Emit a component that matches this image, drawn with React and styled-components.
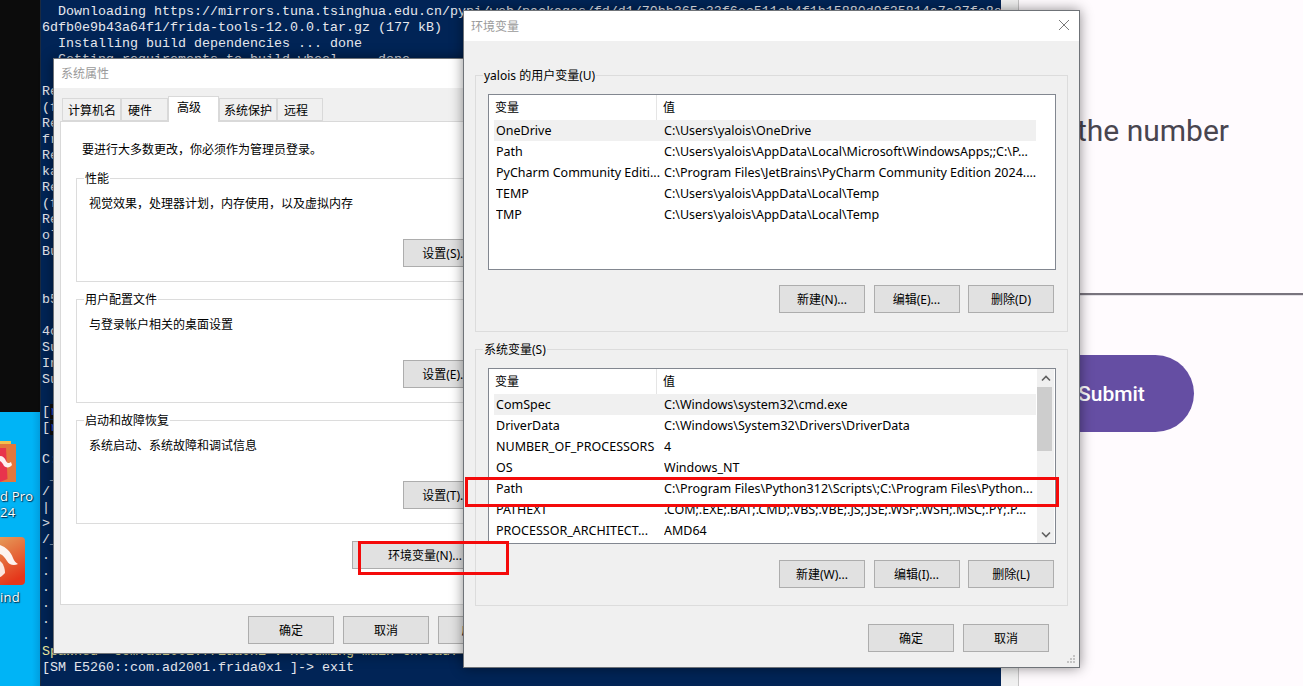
import React from "react";
import styled, { createGlobalStyle } from "styled-components";

const Global = createGlobalStyle`
  html, body { margin: 0; padding: 0; background: #0c0c0c; overflow: hidden; }
  * { box-sizing: border-box; }
`;

const UI = `"Noto Sans", "Noto Sans CJK SC", sans-serif`;
const CJK = `"Noto Sans CJK SC", "Noto Sans", sans-serif`;

const Screen = styled.div`
  position: relative;
  width: 1303px;
  height: 686px;
  overflow: hidden;
  display: flex;
  font-family: ${UI};
  font-size: 12px;
  color: #000;
`;

const LeftStrip = styled.div`
  width: 41px;
  height: 686px;
  display: flex;
  flex-direction: column;
  border-right: 1px solid #1b2a3f;
`;
const BlackArea = styled.div`
  height: 412px;
  background: #0c0c0c;
`;
const Desktop = styled.div`
  position: relative;
  flex: 1;
  overflow: hidden;
  background: linear-gradient(90deg, #00b4f6 0, #00b4f6 32px, #009fe0 40px);
`;
const IconSvg = styled.svg`
  position: absolute;
  left: 0;
  top: ${(p) => p.$top}px;
`;
const IconLabel = styled.div`
  position: absolute;
  left: 0;
  top: ${(p) => p.$top}px;
  font: 500 13px/16px "Open Sans", sans-serif;
  letter-spacing: 0.2px;
  color: #fff;
  white-space: pre;
  text-shadow: 1px 1px 1px #003050, 0 0 2px #003050;
`;

const Terminal = styled.div`
  width: 960px;
  height: 686px;
  padding: 4px 0 0 1px;
  background: #012456;
  overflow: hidden;
`;
const TermLine = styled.div`
  height: 16px;
  font: 13.33px/16px "Liberation Mono", monospace;
  color: ${(p) => (p.$warn ? "#f2eea0" : "#e6e8ee")};
  white-space: pre;
`;
const PromptMark = styled.span`
  background: #0c0c0c;
  color: #1c50e0;
`;

const GreyStrip = styled.div`
  width: 18px;
  height: 686px;
  background: #f0f0f0;
  border-right: 1px solid #c4c4c4;
`;

const AppPane = styled.div`
  flex: 1;
  height: 686px;
  background: #fffbfe;
  display: flex;
  flex-direction: column;
  padding-top: 112px;
  font-family: Roboto, sans-serif;
`;
const FieldLabel = styled.div`
  padding-left: 58px;
  height: 38px;
  font-size: 30px;
  line-height: 38px;
  color: #49454f;
  white-space: nowrap;
`;
const FieldLine = styled.div`
  margin-top: 143px;
  height: 3px;
  border-top: 2px solid #79747e;
  border-bottom: 1px solid #e4e1e6;
`;
const SubmitButton = styled.div`
  margin-top: 59px;
  width: 175px;
  height: 77px;
  border-radius: 0 38.5px 38.5px 0;
  background: #654ea3;
  color: #fff;
  font-size: 21px;
  font-weight: 500;
  line-height: 79px;
  padding-left: 59px;
`;

const Dialog = styled.div`
  position: absolute;
  left: ${(p) => p.$left}px;
  top: ${(p) => p.$top}px;
  width: ${(p) => p.$width}px;
  height: ${(p) => p.$height}px;
  background: #f0f0f0;
  border: 1px solid #6f7378;
  box-shadow: 0 0 12px rgba(0, 0, 0, 0.45);
  display: flex;
  flex-direction: column;
`;
const TitleBar = styled.div`
  height: ${(p) => p.$height}px;
  flex: none;
  background: #fff;
  display: flex;
  align-items: center;
  justify-content: space-between;
  padding: 0 9px ${(p) => p.$lift}px 7px;
  font-family: ${CJK};
  color: #9a9a9a;
`;

const TabStrip = styled.div`
  display: flex;
  height: 24px;
  margin-top: 9px;
  padding-left: 8px;
  align-items: flex-end;
  position: relative;
  z-index: 1;
`;
const Tab = styled.div`
  width: ${(p) => p.$width}px;
  height: ${(p) => (p.$active ? 26 : 23)}px;
  margin-bottom: ${(p) => (p.$active ? -1 : 0)}px;
  padding: ${(p) => (p.$active ? "2px" : "3px")} 0 0 ${(p) => p.$pad}px;
  background: ${(p) => (p.$active ? "#fff" : "#f0f0f0")};
  border: 1px solid #d9d9d9;
  border-bottom: ${(p) => (p.$active ? "none" : "1px solid #d9d9d9")};
  font-family: ${CJK};
  line-height: 16px;
`;
const TabPanel = styled.div`
  height: 484px;
  margin: 0 6px;
  background: #fff;
  border: 1px solid #d9d9d9;
  padding: 18px 15px 0;
  display: flex;
  flex-direction: column;
`;
const Notice = styled.div`
  padding-left: 6px;
  height: 18px;
  line-height: 18px;
  font-family: ${CJK};
`;
const Group = styled.div`
  position: relative;
  flex: none;
  height: ${(p) => p.$height}px;
  margin-top: ${(p) => p.$gap}px;
  border: 1px solid #dcdcdc;
  display: flex;
  flex-direction: column;
`;
const Legend = styled.div`
  position: absolute;
  left: 7px;
  top: -8px;
  padding: 0 1px;
  height: 16px;
  line-height: 16px;
  background: ${(p) => p.$bg};
  font-family: ${UI};
`;
const GroupText = styled.div`
  padding: 16px 0 0 12px;
  line-height: 16px;
  font-family: ${CJK};
`;
const WinButton = styled.div`
  flex: none;
  width: ${(p) => p.$width || 86}px;
  height: 28px;
  background: #e1e1e1;
  border: 1px solid #adadad;
  display: flex;
  align-items: center;
  justify-content: center;
  white-space: nowrap;
  font-family: ${UI};
  color: #000;
`;
const GroupAction = styled(WinButton)`
  align-self: flex-end;
  margin: auto 17px 14px 0;
`;
const EnvVarButton = styled(WinButton)`
  align-self: flex-end;
  margin: 17px 9px 0 0;
`;
const ButtonRow = styled.div`
  display: flex;
  justify-content: flex-end;
  gap: ${(p) => p.$gap}px;
  padding-right: ${(p) => p.$right}px;
  margin-top: ${(p) => p.$top}px;
`;

const EnvBody = styled.div`
  padding: 34px 11px 0;
  display: flex;
  flex-direction: column;
`;
const ListBox = styled.div`
  margin: 18px 11px 0 12px;
  height: 176px;
  border: 1px solid #828790;
  background: #fff;
  display: flex;
  overflow: hidden;
`;
const ListBody = styled.div`
  width: 548px;
  padding-left: 5px;
  overflow: hidden;
`;
const HeadRow = styled.div`
  display: grid;
  grid-template-columns: 163px 1fr;
  height: 25px;
  width: 542px;
  line-height: 24px;
  font-family: ${CJK};
`;
const HeadCell = styled.div`
  padding-left: ${(p) => p.$pad}px;
  border-right: ${(p) => (p.$divider ? "1px solid #e5e5e5" : "none")};
`;
const Row = styled.div`
  display: grid;
  grid-template-columns: 168px 1fr;
  width: 542px;
  height: 21px;
  padding-left: 2px;
  font-size: 12.5px;
  line-height: 21px;
  background: ${(p) => (p.$selected ? "#f0f0f0" : "transparent")};
  white-space: nowrap;
`;
const Cell = styled.div`
  overflow: hidden;
  white-space: pre;
`;
const Scrollbar = styled.div`
  width: 17px;
  background: #f0f0f0;
  display: flex;
  flex-direction: column;
`;
const ScrollArrow = styled.div`
  height: 18px;
  display: flex;
  align-items: center;
  justify-content: center;
`;
const ScrollThumb = styled.div`
  height: 64px;
  margin-right: 2px;
  background: #cdcdcd;
`;
const ScrollTrack = styled.div`
  flex: 1;
`;
const GripSvg = styled.svg`
  position: absolute;
  right: 3px;
  bottom: 3px;
`;

const RedBox = styled.div`
  position: absolute;
  left: ${(p) => p.$left}px;
  top: ${(p) => p.$top}px;
  width: ${(p) => p.$width}px;
  height: ${(p) => p.$height}px;
  border: 3px solid #f40a0a;
  pointer-events: none;
`;

const termLines = [
  "  Downloading https://mirrors.tuna.tsinghua.edu.cn/pypi/web/packages/fd/d1/70bb365e33f6ec511cb4f1b15880d9f25814a7c37fe8e",
  "6dfb0e9b43a64f1/frida-tools-12.0.0.tar.gz (177 kB)",
  "  Installing build dependencies ... done",
  "  Getting requirements to build wheel ... done",
  "",
  "Re",
  "(f",
  "Re",
  "fr",
  "Re",
  "ka",
  "Re",
  "(f",
  "Re",
  "ol",
  "Bu",
  "",
  "",
  "b5",
  "",
  "4c",
  "Su",
  "In",
  "Su",
  "",
  "[",
  "[",
  "",
  "C:",
  " ____",
  "/ ",
  "| ",
  "> ",
  "/_",
  ". ",
  ". ",
  ". ",
  ". ",
  ". ",
  ". ",
];

const userRows = [
  ["OneDrive", "C:\\Users\\yalois\\OneDrive"],
  ["Path", "C:\\Users\\yalois\\AppData\\Local\\Microsoft\\WindowsApps;;C:\\P..."],
  ["PyCharm Community Editi...", "C:\\Program Files\\JetBrains\\PyCharm Community Edition 2024...."],
  ["TEMP", "C:\\Users\\yalois\\AppData\\Local\\Temp"],
  ["TMP", "C:\\Users\\yalois\\AppData\\Local\\Temp"],
];
const systemRows = [
  ["ComSpec", "C:\\Windows\\system32\\cmd.exe"],
  ["DriverData", "C:\\Windows\\System32\\Drivers\\DriverData"],
  ["NUMBER_OF_PROCESSORS", "4"],
  ["OS", "Windows_NT"],
  ["Path", "C:\\Program Files\\Python312\\Scripts\\;C:\\Program Files\\Python..."],
  ["PATHEXT", ".COM;.EXE;.BAT;.CMD;.VBS;.VBE;.JS;.JSE;.WSF;.WSH;.MSC;.PY;.P..."],
  ["PROCESSOR_ARCHITECT...", "AMD64"],
];

function VarList({ rows, scroll }) {
  return (
    <ListBox>
      <ListBody>
        <HeadRow>
          <HeadCell $pad={1} $divider>变量</HeadCell>
          <HeadCell $pad={6}>值</HeadCell>
        </HeadRow>
        {rows.map(([k, v], i) => (
          <Row key={k + i} $selected={i === 0}>
            <Cell>{k}</Cell>
            <Cell>{v}</Cell>
          </Row>
        ))}
      </ListBody>
      {scroll && (
        <Scrollbar>
          <ScrollArrow>
            <svg width="10" height="7" viewBox="0 0 10 7">
              <path d="M1 5.5 5 1.5 9 5.5" fill="none" stroke="#606060" strokeWidth="1.6" />
            </svg>
          </ScrollArrow>
          <ScrollThumb />
          <ScrollTrack />
          <ScrollArrow>
            <svg width="10" height="7" viewBox="0 0 10 7">
              <path d="M1 1.5 5 5.5 9 1.5" fill="none" stroke="#606060" strokeWidth="1.6" />
            </svg>
          </ScrollArrow>
        </Scrollbar>
      )}
    </ListBox>
  );
}

export default function App() {
  return (
    <Screen>
      <Global />
      <LeftStrip>
        <BlackArea />
        <Desktop>
          <IconSvg $top={28} width="18" height="44" viewBox="0 0 18 44">
            <path d="M0 1h11v5H0z" fill="#f4c04e" />
            <path d="M0 4h16v38H0z" fill="#e4773c" />
            <path d="M0 8h6l1.5 31L0 42z" fill="#e8344c" />
            <path d="M0 16c3 0 5 2 6 5 1 2 3 3 5 1l1 3c-2 3-6 3-8 1-1-2-2-4-4-5z" fill="#fff" opacity="0.92" />
          </IconSvg>
          <IconLabel $top={76}>d Pro</IconLabel>
          <IconLabel $top={92}>24</IconLabel>
          <IconSvg $top={125} width="26" height="49" viewBox="0 0 26 49">
            <defs>
              <linearGradient id="orange" x1="0" y1="0" x2="0.3" y2="1">
                <stop offset="0" stopColor="#e59a58" />
                <stop offset="1" stopColor="#e5361a" />
              </linearGradient>
            </defs>
            <path d="M0 0h21a4 4 0 0 1 4 4v40a4 4 0 0 1-4 4H0z" fill="url(#orange)" />
            <path d="M0 8c6 2 11 7 13 13 1 3 3 5 5 6-4 2-9 1-11-3C5 21 3 18 0 17z" fill="#fff" opacity="0.92" />
            <path d="M0 24c3 2 5 7 5 12-2 2-4 4-5 4z" fill="#fff" opacity="0.85" />
          </IconSvg>
          <IconLabel $top={177}>ind</IconLabel>
        </Desktop>
      </LeftStrip>

      <Terminal>
        {termLines.map((line, i) => (
          <TermLine key={i}>
            {line === "[" ? (
              <>
                [<PromptMark>r</PromptMark>
              </>
            ) : (
              line || " "
            )}
          </TermLine>
        ))}
        <TermLine $warn>{"Spawned `com.ad2001.frida0x1`. Resuming main thread!"}</TermLine>
        <TermLine>{"[SM E5260::com.ad2001.frida0x1 ]-> exit"}</TermLine>
      </Terminal>

      <GreyStrip />

      <AppPane>
        <FieldLabel>the number</FieldLabel>
        <FieldLine />
        <SubmitButton>Submit</SubmitButton>
      </AppPane>

      <Dialog $left={53} $top={58} $width={477} $height={596}>
        <TitleBar $height={29} $lift={2}>系统属性</TitleBar>
        <TabStrip>
          <Tab $width={59} $pad={5}>计算机名</Tab>
          <Tab $width={47} $pad={6}>硬件</Tab>
          <Tab $active $width={51} $pad={8}>高级</Tab>
          <Tab $width={58} $pad={4}>系统保护</Tab>
          <Tab $width={46} $pad={6}>远程</Tab>
        </TabStrip>
        <TabPanel>
          <Notice>要进行大多数更改，你必须作为管理员登录。</Notice>
          <Group $height={104} $gap={20}>
            <Legend $bg="#fff">性能</Legend>
            <GroupText>视觉效果，处理器计划，内存使用，以及虚拟内存</GroupText>
            <GroupAction>设置(S)...</GroupAction>
          </Group>
          <Group $height={104} $gap={17}>
            <Legend $bg="#fff">用户配置文件</Legend>
            <GroupText>与登录帐户相关的桌面设置</GroupText>
            <GroupAction>设置(E)...</GroupAction>
          </Group>
          <Group $height={104} $gap={17}>
            <Legend $bg="#fff">启动和故障恢复</Legend>
            <GroupText>系统启动、系统故障和调试信息</GroupText>
            <GroupAction>设置(T)...</GroupAction>
          </Group>
          <EnvVarButton $width={146}>环境变量(N)...</EnvVarButton>
        </TabPanel>
        <ButtonRow $gap={9} $right={5} $top={11}>
          <WinButton>确定</WinButton>
          <WinButton>取消</WinButton>
          <WinButton>应用(A)</WinButton>
        </ButtonRow>
      </Dialog>

      <Dialog $left={463} $top={10} $width={617} $height={658}>
        <TitleBar $height={30} $lift={2}>
          环境变量
          <svg width="12" height="12" viewBox="0 0 12 12">
            <path d="M1 1 11 11M11 1 1 11" stroke="#7a7a7a" strokeWidth="1" />
          </svg>
        </TitleBar>
        <EnvBody>
          <Group $height={257} $gap={0}>
            <Legend $bg="#f0f0f0">yalois 的用户变量(U)</Legend>
            <VarList rows={userRows} />
            <ButtonRow $gap={8.5} $right={13} $top={15}>
              <WinButton>新建(N)...</WinButton>
              <WinButton>编辑(E)...</WinButton>
              <WinButton>删除(D)</WinButton>
            </ButtonRow>
          </Group>
          <Group $height={257} $gap={17}>
            <Legend $bg="#f0f0f0">系统变量(S)</Legend>
            <VarList rows={systemRows} scroll />
            <ButtonRow $gap={8.5} $right={13} $top={16}>
              <WinButton>新建(W)...</WinButton>
              <WinButton>编辑(I)...</WinButton>
              <WinButton>删除(L)</WinButton>
            </ButtonRow>
          </Group>
          <ButtonRow $gap={9} $right={19} $top={18}>
            <WinButton>确定</WinButton>
            <WinButton>取消</WinButton>
          </ButtonRow>
        </EnvBody>
        <GripSvg width="10" height="10" viewBox="0 0 10 10">
          <path d="M7 1h2v2H7zM4 4h2v2H4zM7 4h2v2H7zM1 7h2v2H1zM4 7h2v2H4zM7 7h2v2H7z" fill="#c4c4c4" />
        </GripSvg>
      </Dialog>

      <RedBox $left={465} $top={477} $width={594} $height={30} />
      <RedBox $left={358} $top={541} $width={151} $height={34} />
    </Screen>
  );
}
